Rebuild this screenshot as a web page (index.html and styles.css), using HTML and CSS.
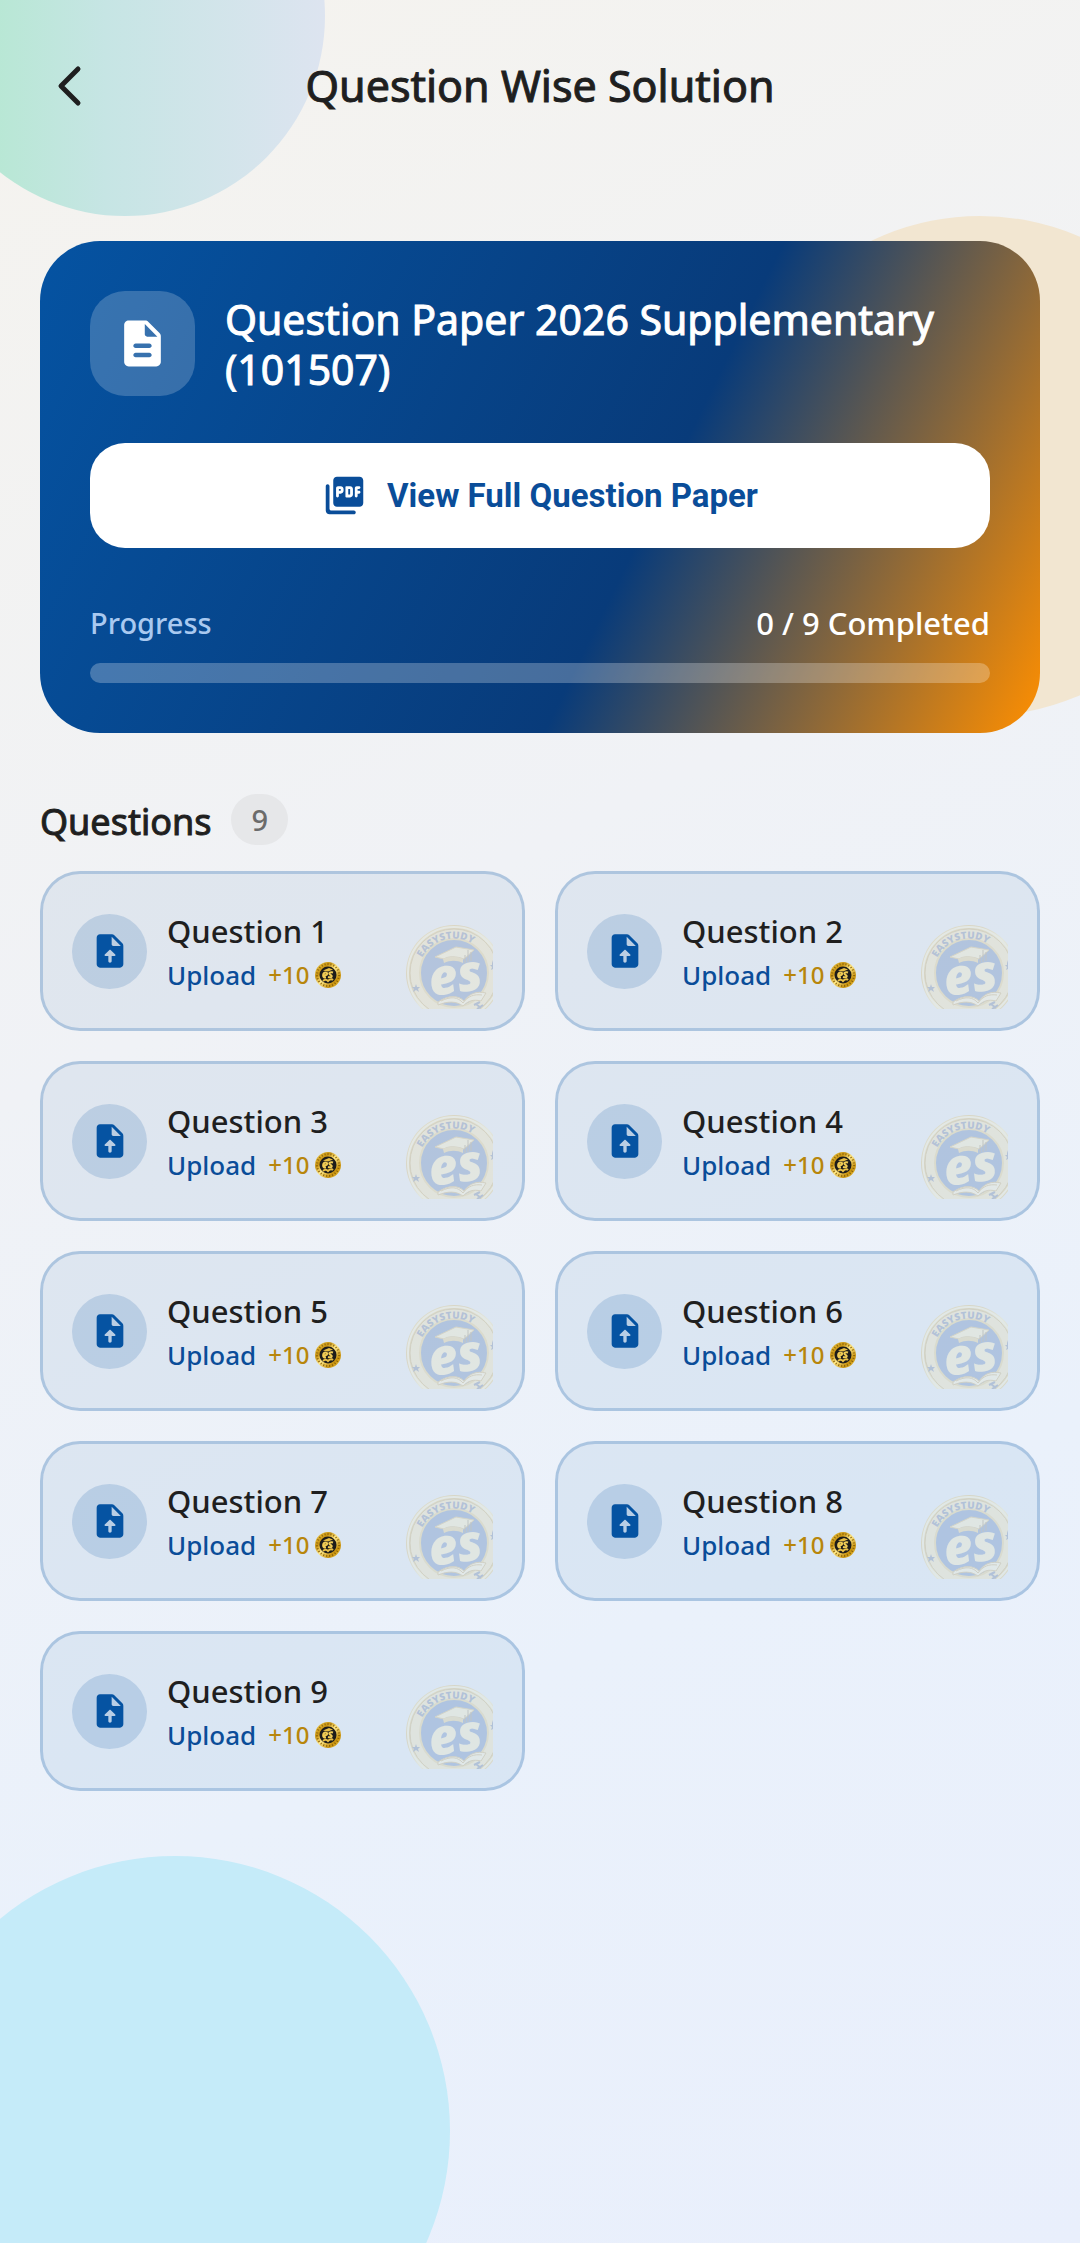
FILE: index.html
```html
<!DOCTYPE html>
<html lang="en">
<head>
    <meta charset="UTF-8">
    <meta name="viewport" content="width=device-width, initial-scale=1.0">
    <title>Question Wise Solution</title>
    <link rel="stylesheet" href="styles.css">
</head>
<body>
    <!-- shared icons -->
    <svg class="gradients" aria-hidden="true">
        <defs>
            <linearGradient id="gold" x1="0" y1="0" x2="1" y2="1">
                <stop offset="0" stop-color="#f7d85c"/>
                <stop offset="0.3" stop-color="#c8920f"/>
                <stop offset="0.5" stop-color="#ffe98a"/>
                <stop offset="0.75" stop-color="#c8920f"/>
                <stop offset="1" stop-color="#f3cf4a"/>
            </linearGradient>
        </defs>
    </svg>
    <svg class="sprite" aria-hidden="true">
        <symbol id="icon-upload" viewBox="0 0 24 24">
            <path fill-rule="evenodd" d="M14.59 2.59c-.38-.38-.89-.59-1.42-.59H6c-1.1 0-2 .9-2 2v16c0 1.1.89 2 1.99 2H18c1.1 0 2-.9 2-2V8.83c0-.53-.21-1.04-.59-1.41l-4.82-4.83zM13 15v3c0 .55-.45 1-1 1s-1-.45-1-1v-3H9.21c-.45 0-.67-.54-.35-.85l2.8-2.79c.2-.19.51-.19.71 0l2.79 2.79c.3.31.08.85-.37.85H13zM13 8V3.5L18.5 9H14c-.55 0-1-.45-1-1z"/>
        </symbol>
        <symbol id="icon-coin" viewBox="0 0 26 26">
            <circle cx="13" cy="13" r="13" fill="url(#gold)"/>
            <circle cx="13" cy="13" r="11" fill="none" stroke="#8a6208" stroke-width="2" stroke-dasharray="1 2"/>
            <circle cx="13" cy="13" r="8.5" fill="#1d1c1a"/>
            <path d="M8 8.5l6-2.5 4 1.5-5 2z" fill="#e9c046"/>
            <path d="M8 13.5c5 0 5-3 2.5-3S6.5 16 11 15.5M18 10.5c-3-1-5 1-2.5 2.3s1 3.2-2.5 2.2" fill="none" stroke="#f0cc55" stroke-width="2"/>
            <path d="M8 19c2-2 4-1 5 0 2-2 4-2 5-1" fill="none" stroke="#e9c046" stroke-width="2"/>
        </symbol>
        <symbol id="icon-seal" viewBox="0 0 87 84">
            <path id="seal-arc" d="M13 58a36 36 0 1 1 70 0" fill="none"/>
            <circle cx="48" cy="48" r="48" fill="url(#gold)"/>
            <circle cx="48" cy="48" r="46" fill="none" stroke="#fff2b8" stroke-width="2"/>
            <circle cx="48" cy="48" r="44" fill="#f3dc8c" stroke="#a97c12" stroke-width="1"/>
            <circle cx="48" cy="48" r="34" fill="#0c4397" stroke="#d9b040" stroke-width="2"/>
            <text class="seal-name"><textPath href="#seal-arc" startOffset="26">EASYSTUDY</textPath></text>
            <path d="M10 59l1 3h3l-2 2 1 3-3-2-3 2 1-3-2-2h3zM86 35l1 3v6l-2 1 1-3-2-2h2z" fill="#18356f"/>
            <path d="M68 80l6-3M71 84l6-4M70 79l5 4" stroke="#18356f" stroke-width="2"/>
            <path d="M29 32l21-10 18 3-10 9c-8-3-16-3-20 0z" fill="#f8e6a4" stroke="#b98d22" stroke-width="1"/>
            <path d="M37 34c6-3 14-3 20 0v4c-6-3-13-3-19 0z" fill="#d8b24a"/>
            <path d="M62 25v12M59 30v8M65 27v9" stroke="#58450f" stroke-width="1"/>
            <text class="seal-logo" x="23" y="68" transform="rotate(-8 48 56)">es</text>
            <path d="M32 77c10-7 20-7 26-1 6-8 13-10 22-8l-5 8c-8-2-13 0-18 5-7-5-15-5-25-1z" fill="#fff0bd" stroke="#a97c12" stroke-width="1"/>
            <path d="M35 76c10-5 17-4 22 2 5-7 11-9 19-8" fill="none" stroke="#a97c12" stroke-width="1"/>
        </symbol>
    </svg>

    <div class="bubbles">
        <div class="bubble bubble-green"></div>
        <div class="bubble bubble-orange"></div>
        <div class="bubble bubble-cyan"></div>
    </div>

    <header class="topbar">
        <button class="back" type="button" aria-label="Back">
            <svg viewBox="0 0 50 50"><path d="M32 8L15 25l17 17"/></svg>
        </button>
        <h1>Question Wise Solution</h1>
    </header>

    <main>
        <section class="paper">
            <div class="paper-head">
                <div class="paper-icon">
                    <svg viewBox="0 0 24 24"><path d="M14.59 2.59c-.38-.38-.89-.59-1.42-.59H6c-1.1 0-2 .9-2 2v16c0 1.1.89 2 1.99 2H18c1.1 0 2-.9 2-2V8.83c0-.53-.21-1.04-.59-1.41l-4.82-4.83zM15 18H9c-.55 0-1-.45-1-1s.45-1 1-1h6c.55 0 1 .45 1 1s-.45 1-1 1zm0-4H9c-.55 0-1-.45-1-1s.45-1 1-1h6c.55 0 1 .45 1 1s-.45 1-1 1zm-2-6V3.5L18.5 9H14c-.55 0-1-.45-1-1z"/></svg>
                </div>
                <h2>Question Paper 2026 Supplementary (101507)</h2>
            </div>
            <button class="view-btn" type="button">
                <svg viewBox="0 0 24 24"><path d="M20 2H8c-1.1 0-2 .9-2 2v12c0 1.1.9 2 2 2h12c1.1 0 2-.9 2-2V4c0-1.1-.9-2-2-2zm-8.5 7.5c0 .83-.67 1.5-1.5 1.5H9v1.25c0 .41-.34.75-.75.75s-.75-.34-.75-.75V8c0-.55.45-1 1-1H10c.83 0 1.5.67 1.5 1.5v1zm5 2c0 .83-.67 1.5-1.5 1.5h-2c-.28 0-.5-.22-.5-.5v-5c0-.28.22-.5.5-.5h2c.83 0 1.5.67 1.5 1.5v3zm4-3.75c0 .41-.34.75-.75.75H19v1h.75c.41 0 .75.34.75.75s-.34.75-.75.75H19v1.25c0 .41-.34.75-.75.75s-.75-.34-.75-.75V8c0-.55.45-1 1-1h1.25c.41 0 .75.34.75.75zM9 9.5h1v-1H9v1zM3 6c-.55 0-1 .45-1 1v13c0 1.1.9 2 2 2h13c.55 0 1-.45 1-1s-.45-1-1-1H5c-.55 0-1-.45-1-1V7c0-.55-.45-1-1-1zm11 5.5h1v-3h-1v3z"/></svg>
                View Full Question Paper
            </button>
            <div class="progress-row">
                <label for="progress">Progress</label>
                <span>0 / 9 Completed</span>
            </div>
            <progress id="progress" value="0" max="9"></progress>
        </section>

        <div class="list-head">
            <h2>Questions</h2>
            <span class="count">9</span>
        </div>

        <div class="questions">
            <button class="question" type="button">
                <span class="q-icon"><svg><use href="#icon-upload"/></svg></span>
                <span class="q-text">
                    <span class="q-name">Question 1</span>
                    <span class="q-action">Upload <span class="points">+10</span><svg class="coin"><use href="#icon-coin"/></svg></span>
                </span>
                <svg class="seal"><use href="#icon-seal"/></svg>
            </button>
            <button class="question" type="button">
                <span class="q-icon"><svg><use href="#icon-upload"/></svg></span>
                <span class="q-text">
                    <span class="q-name">Question 2</span>
                    <span class="q-action">Upload <span class="points">+10</span><svg class="coin"><use href="#icon-coin"/></svg></span>
                </span>
                <svg class="seal"><use href="#icon-seal"/></svg>
            </button>
            <button class="question" type="button">
                <span class="q-icon"><svg><use href="#icon-upload"/></svg></span>
                <span class="q-text">
                    <span class="q-name">Question 3</span>
                    <span class="q-action">Upload <span class="points">+10</span><svg class="coin"><use href="#icon-coin"/></svg></span>
                </span>
                <svg class="seal"><use href="#icon-seal"/></svg>
            </button>
            <button class="question" type="button">
                <span class="q-icon"><svg><use href="#icon-upload"/></svg></span>
                <span class="q-text">
                    <span class="q-name">Question 4</span>
                    <span class="q-action">Upload <span class="points">+10</span><svg class="coin"><use href="#icon-coin"/></svg></span>
                </span>
                <svg class="seal"><use href="#icon-seal"/></svg>
            </button>
            <button class="question" type="button">
                <span class="q-icon"><svg><use href="#icon-upload"/></svg></span>
                <span class="q-text">
                    <span class="q-name">Question 5</span>
                    <span class="q-action">Upload <span class="points">+10</span><svg class="coin"><use href="#icon-coin"/></svg></span>
                </span>
                <svg class="seal"><use href="#icon-seal"/></svg>
            </button>
            <button class="question" type="button">
                <span class="q-icon"><svg><use href="#icon-upload"/></svg></span>
                <span class="q-text">
                    <span class="q-name">Question 6</span>
                    <span class="q-action">Upload <span class="points">+10</span><svg class="coin"><use href="#icon-coin"/></svg></span>
                </span>
                <svg class="seal"><use href="#icon-seal"/></svg>
            </button>
            <button class="question" type="button">
                <span class="q-icon"><svg><use href="#icon-upload"/></svg></span>
                <span class="q-text">
                    <span class="q-name">Question 7</span>
                    <span class="q-action">Upload <span class="points">+10</span><svg class="coin"><use href="#icon-coin"/></svg></span>
                </span>
                <svg class="seal"><use href="#icon-seal"/></svg>
            </button>
            <button class="question" type="button">
                <span class="q-icon"><svg><use href="#icon-upload"/></svg></span>
                <span class="q-text">
                    <span class="q-name">Question 8</span>
                    <span class="q-action">Upload <span class="points">+10</span><svg class="coin"><use href="#icon-coin"/></svg></span>
                </span>
                <svg class="seal"><use href="#icon-seal"/></svg>
            </button>
            <button class="question" type="button">
                <span class="q-icon"><svg><use href="#icon-upload"/></svg></span>
                <span class="q-text">
                    <span class="q-name">Question 9</span>
                    <span class="q-action">Upload <span class="points">+10</span><svg class="coin"><use href="#icon-coin"/></svg></span>
                </span>
                <svg class="seal"><use href="#icon-seal"/></svg>
            </button>
        </div>
    </main>
</body>
</html>
```

FILE: styles.css
```css
* {
    box-sizing: border-box;
}
body {
    margin: 0;
    min-height: 100vh;
    position: relative;
    font-family: "Noto Sans", sans-serif;
    font-weight: 500;
    color: #1f1f1f;
    background: linear-gradient(154deg, #f5f3ee, #f0f2f6 40%, #eaf1fb 70%, #e9effc);
}
h1, h2 {
    margin: 0;
    font-weight: 400;
    -webkit-text-stroke: 1px;
}
button {
    font-family: inherit;
    font-weight: inherit;
    border: none;
    cursor: pointer;
}
.gradients {
    position: absolute;
    width: 0;
    height: 0;
}
.sprite {
    display: none;
}

/* background circles */
.bubbles {
    position: absolute;
    inset: 0;
    z-index: -1;
    overflow: hidden;
}
.bubble {
    position: absolute;
    border-radius: 50%;
}
.bubble-green {
    width: 400px;
    height: 400px;
    left: -75px;
    top: -184px;
    background: linear-gradient(90deg, #b4e8d0 10%, #c6e5e4 45%, #dde4f0);
}
.bubble-orange {
    width: 500px;
    height: 500px;
    right: -150px;
    top: 216px;
    background: #f2e6d1;
}
.bubble-cyan {
    width: 550px;
    height: 550px;
    left: -100px;
    bottom: -163px;
    background: #c5ebf9;
}

.topbar {
    display: grid;
    grid-template-columns: 50px 1fr 50px;
    align-items: center;
    height: 171px;
    padding: 0 46px;
}
.topbar h1 {
    font-size: 43px;
    line-height: 60px;
    text-align: center;
}
.back {
    width: 50px;
    height: 50px;
    padding: 0;
    background: none;
}
.back svg {
    display: block;
    fill: none;
    stroke: #1f1f1f;
    stroke-width: 5;
    stroke-linecap: round;
    stroke-linejoin: round;
}

main {
    padding: 70px 40px 60px;
}
.paper {
    padding: 50px;
    border-radius: 60px;
    color: #fff;
    background: linear-gradient(116deg, #0553a2, #083b7a 60%, #ff8f00);
}
.paper-head {
    display: flex;
    align-items: center;
    gap: 30px;
}
.paper-head h2 {
    font-size: 41px;
    line-height: 50px;
}
.paper-icon {
    display: flex;
    flex: none;
    align-items: center;
    justify-content: center;
    width: 105px;
    height: 105px;
    border-radius: 35px;
    background: rgba(255, 255, 255, 0.2);
}
.paper-icon svg {
    width: 55px;
    fill: #fff;
}
.view-btn {
    display: flex;
    align-items: center;
    justify-content: center;
    gap: 20px;
    width: 100%;
    height: 105px;
    margin-top: 47px;
    border-radius: 35px;
    background: #fff;
    color: #0a4d99;
    font-family: Roboto, sans-serif;
    font-size: 33px;
    font-weight: 700;
}
.view-btn svg {
    width: 45px;
    fill: #0a4d99;
}
.progress-row {
    display: flex;
    align-items: center;
    justify-content: space-between;
    margin-top: 54px;
    font-size: 31px;
    line-height: 42px;
}
.progress-row label {
    font-size: 29px;
    color: #a9c9f0;
}
progress {
    display: block;
    appearance: none;
    width: 100%;
    height: 20px;
    margin-top: 19px;
    border: none;
    border-radius: 10px;
    overflow: hidden;
    background: rgba(255, 255, 255, 0.26);
}
progress::-webkit-progress-bar {
    background: none;
}
progress::-webkit-progress-value {
    background: #fff;
}

.list-head {
    display: flex;
    align-items: flex-end;
    gap: 20px;
    margin-top: 61px;
    margin-bottom: 26px;
}
.list-head h2 {
    font-size: 36px;
    line-height: 46px;
}
.count {
    padding: 0 20px;
    border-radius: 26px;
    background: #e6e7e9;
    color: #6b6b6b;
    font-size: 29px;
    line-height: 51px;
}

.questions {
    display: grid;
    grid-template-columns: 1fr 1fr;
    gap: 30px;
}
.question {
    display: flex;
    align-items: center;
    gap: 20px;
    height: 160px;
    padding: 19px 29px;
    border: 3px solid rgba(5, 83, 162, 0.28);
    border-radius: 40px;
    background: rgba(5, 83, 162, 0.07);
    background-clip: padding-box;
    color: #1f1f1f;
    text-align: left;
}
.q-icon {
    display: flex;
    flex: none;
    align-items: center;
    justify-content: center;
    width: 75px;
    height: 75px;
    border-radius: 50%;
    background: rgba(5, 83, 162, 0.16);
}
.q-icon svg {
    width: 40px;
    height: 40px;
    fill: #0553a2;
}
.q-text {
    display: flex;
    flex: 1;
    flex-direction: column;
    padding-top: 4px;
}
.q-name {
    font-size: 31px;
    line-height: 44px;
}
.q-action {
    display: flex;
    align-items: center;
    font-size: 26px;
    line-height: 44px;
    color: #0a4d99;
}
.points {
    margin: 0 6px 0 12px;
    font-size: 24px;
    color: #b8860b;
}
.coin {
    width: 26px;
    height: 26px;
}
.seal {
    flex: none;
    align-self: flex-end;
    width: 87px;
    height: 84px;
    opacity: 0.2;
}
.seal-name {
    font-family: "Open Sans", sans-serif;
    font-size: 10px;
    font-weight: 800;
    fill: #18356f;
}
.seal-logo {
    font-family: "Open Sans", sans-serif;
    font-size: 50px;
    font-style: italic;
    font-weight: 800;
    fill: #f8e6a4;
}
```
